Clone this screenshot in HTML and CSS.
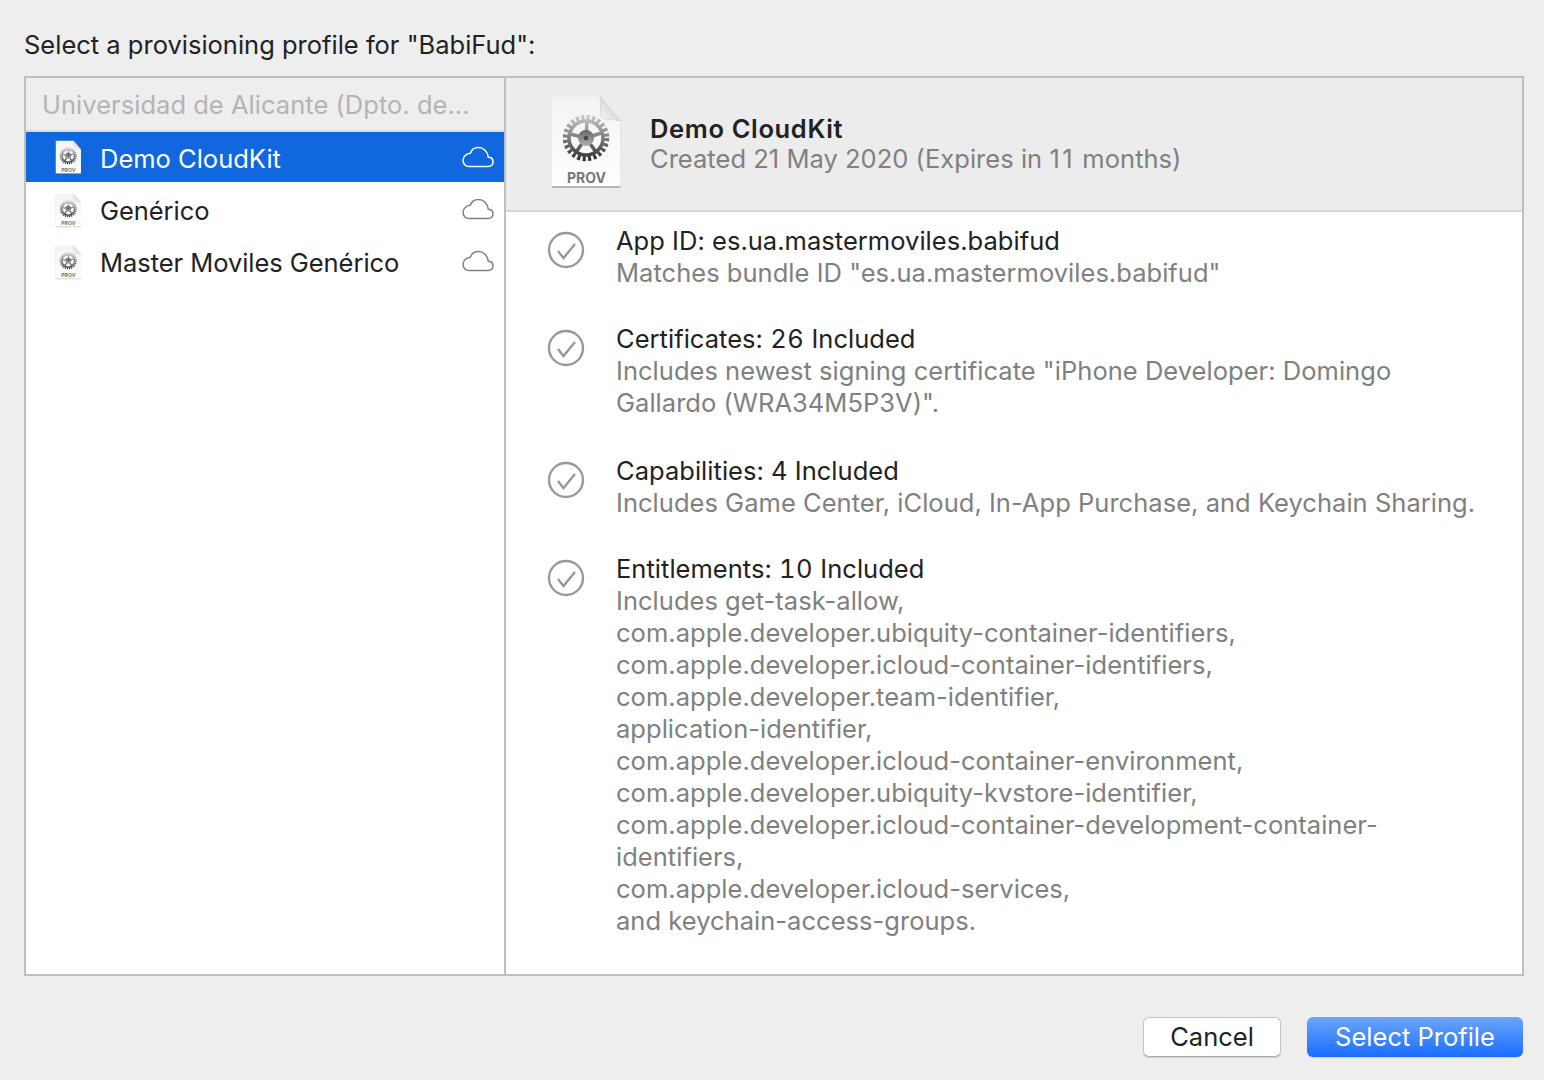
FILE: index.html
```html
<!DOCTYPE html>
<html lang="en">
<head>
    <meta charset="UTF-8">
    <title>Select a provisioning profile</title>
    <link rel="stylesheet" href="styles.css">
</head>
<body>
    <svg class="defs" width="0" height="0">
        <defs>
            <linearGradient id="paper" x1="0" y1="0" x2="0" y2="1">
                <stop offset="0" stop-color="#f3f3f3"/>
                <stop offset="1" stop-color="#ffffff"/>
            </linearGradient>
            <linearGradient id="fold" x1="0" y1="1" x2="1" y2="0">
                <stop offset="0" stop-color="#fbfbfb"/>
                <stop offset="1" stop-color="#bdbdbd"/>
            </linearGradient>
            <linearGradient id="steel" gradientUnits="userSpaceOnUse" x1="36" y1="18" x2="36" y2="66">
                <stop offset="0" stop-color="#d0d0d0"/>
                <stop offset="0.45" stop-color="#858585"/>
                <stop offset="1" stop-color="#2e2e2e"/>
            </linearGradient>
            <linearGradient id="hub" gradientUnits="userSpaceOnUse" x1="36" y1="34" x2="36" y2="50">
                <stop offset="0" stop-color="#666"/>
                <stop offset="1" stop-color="#b0b0b0"/>
            </linearGradient>
            <symbol id="prov" viewBox="0 0 76 96">
                <path d="M2 1.500H50L70.500 25V90.500H2Z" fill="#000" opacity="0.22" transform="translate(0 1.500)"/>
                <path d="M2 1H50L70.500 25V90H2Z" fill="url(#paper)"/>
                <path d="M50 1L70.500 25C62 23 54 24 51 21C50 15 51 8 50 1Z" fill="url(#fold)" stroke="#c8c8c8" stroke-width="0.600"/>
                <circle cx="36" cy="42" r="20.500" fill="none" stroke="url(#steel)" stroke-width="5.500" stroke-dasharray="3.100 2.270"/>
                <circle cx="36" cy="42" r="17" fill="none" stroke="url(#steel)" stroke-width="3.500"/>
                <path d="M36 42L37 26M36 42L51 37M36 42L46 56M36 42L26 56M36 42L20 38" stroke="url(#steel)" stroke-width="3.500"/>
                <circle cx="36" cy="42" r="8" fill="url(#hub)"/>
                <circle cx="36" cy="42" r="2.200" fill="#444"/>
                <text class="prov-label" x="36.500" y="87" text-anchor="middle">PROV</text>
            </symbol>
            <symbol id="cloud" viewBox="0 0 32 22">
                <path d="M7 20.500H26C29 20.500 31 18.500 31 15.800C31 13 29 11.200 26.300 11.200C25.600 5.500 21.500 1.500 16.500 1.500C12.500 1.500 9.500 3.800 8.300 7.300C4.300 7.500 1 10.500 1 14.300C1 17.800 3.500 20.500 7 20.500Z" fill="none" stroke="currentColor" stroke-width="1.500"/>
            </symbol>
            <symbol id="check" viewBox="0 0 38 38">
                <circle cx="19" cy="19" r="17" fill="none" stroke="#999" stroke-width="2.400"/>
                <path d="M11 20L16.500 27L28 13" fill="none" stroke="#999" stroke-width="2.400"/>
            </symbol>
        </defs>
    </svg>

    <h1 class="title">Select a provisioning profile for "BabiFud":</h1>

    <div class="panel">
        <div class="sidebar">
            <div class="team">Universidad de Alicante (Dpto. de...</div>
            <div class="row selected">
                <svg class="row-icon"><use href="#prov"/></svg>
                <span class="row-name">Demo CloudKit</span>
                <svg class="cloud"><use href="#cloud"/></svg>
            </div>
            <div class="row">
                <svg class="row-icon"><use href="#prov"/></svg>
                <span class="row-name">Genérico</span>
                <svg class="cloud"><use href="#cloud"/></svg>
            </div>
            <div class="row">
                <svg class="row-icon"><use href="#prov"/></svg>
                <span class="row-name">Master Moviles Genérico</span>
                <svg class="cloud"><use href="#cloud"/></svg>
            </div>
        </div>

        <div class="detail">
            <div class="detail-head">
                <svg class="big-icon"><use href="#prov"/></svg>
                <div class="head-text">
                    <div class="profile-name">Demo CloudKit</div>
                    <div class="muted">Created 21 May 2020 (Expires in <span class="months">11</span> months)</div>
                </div>
            </div>

            <div class="checks">
                <div class="check">
                    <svg class="check-icon"><use href="#check"/></svg>
                    <div>
                        <div class="check-title">App ID: es.ua.mastermoviles.babifud</div>
                        <div class="muted">Matches bundle ID "es.ua.mastermoviles.babifud"</div>
                    </div>
                </div>
                <div class="check wide-gap">
                    <svg class="check-icon"><use href="#check"/></svg>
                    <div>
                        <div class="check-title">Certificates: <span class="count">26</span> Included</div>
                        <div class="muted">Includes newest signing certificate "iPhone Developer: Domingo<br>Gallardo (WRA34M5P3V)".</div>
                    </div>
                </div>
                <div class="check">
                    <svg class="check-icon"><use href="#check"/></svg>
                    <div>
                        <div class="check-title">Capabilities: 4 Included</div>
                        <div class="muted">Includes Game Center, iCloud, In-App Purchase, and Keychain Sharing.</div>
                    </div>
                </div>
                <div class="check">
                    <svg class="check-icon"><use href="#check"/></svg>
                    <div>
                        <div class="check-title">Entitlements: <span class="count">10</span> Included</div>
                        <div class="muted">Includes get-task-allow,<br>com.apple.developer.ubiquity-container-identifiers,<br>com.apple.developer.icloud-container-identifiers,<br>com.apple.developer.team-identifier,<br>application-identifier,<br>com.apple.developer.icloud-container-environment,<br>com.apple.developer.ubiquity-kvstore-identifier,<br>com.apple.developer.icloud-container-development-container-<br>identifiers,<br>com.apple.developer.icloud-services,<br>and keychain-access-groups.</div>
                    </div>
                </div>
            </div>
        </div>
    </div>

    <div class="buttons">
        <button class="btn">Cancel</button>
        <button class="btn primary">Select Profile</button>
    </div>
</body>
</html>
```

FILE: styles.css
```css
* {
    box-sizing: border-box;
}
body {
    margin: 0;
    height: 1080px;
    overflow: hidden;
    padding: 29px 20px 0 24px;
    background-color: #eeeeee;
    color: #222;
    font-family: Inter, "Liberation Sans", sans-serif;
    font-size: 25.5px;
    letter-spacing: 0.03px;
    line-height: 32px;
}
.defs {
    position: absolute;
}
.title {
    margin: 0 0 15px;
    font-size: 25.5px;
    font-weight: 400;
    letter-spacing: 0;
    line-height: 32px;
}
.panel {
    display: flex;
    width: 1500px;
    height: 900px;
    background-color: #fff;
    border: 2px solid #bfbfbf;
}
.sidebar {
    width: 480px;
    border-right: 2px solid #bfbfbf;
    flex-shrink: 0;
}
.team {
    height: 54px;
    padding: 11px 0 0 16px;
    background-color: #eeeeee;
    border-bottom: 2px solid #dcdcdc;
    color: #b4b4b4;
}
.row {
    display: flex;
    align-items: center;
    height: 52px;
    padding: 0 10px 0 29px;
}
.row.selected {
    height: 50px;
    margin-bottom: 2px;
    background-color: #1167dd;
    color: #fff;
}
.row-icon {
    width: 28px;
    height: 36px;
    margin-top: 2px;
    flex-shrink: 0;
}
.row-name {
    flex: 1;
    margin-left: 17px;
    padding-top: 2px;
    letter-spacing: -0.05px;
}
.selected .row-name {
    padding-top: 4px;
    letter-spacing: 0;
}
.cloud {
    width: 32px;
    height: 22px;
    margin-top: -3px;
    color: #808080;
}
.selected .cloud {
    margin-top: 0;
    color: #fff;
}
.prov-label {
    font-size: 14px;
    font-weight: 700;
    fill: #777;
}
.detail {
    flex: 1;
}
.detail-head {
    display: flex;
    align-items: center;
    height: 134px;
    padding: 0 0 0 44px;
    background-color: #ececec;
    border-bottom: 2px solid #d6d6d6;
}
.big-icon {
    width: 76px;
    height: 96px;
    margin-right: 24px;
}
.head-text {
    line-height: 30px;
}
.profile-name {
    font-weight: 600;
    letter-spacing: 0.65px;
    color: #222;
}
.muted {
    color: #808080;
}
.months {
    letter-spacing: 2.5px;
}
.count {
    font-variant-numeric: tabular-nums;
    letter-spacing: 0.5px;
}
.checks {
    padding: 13px 0 0 41px;
}
.check {
    display: flex;
    margin-bottom: 34px;
}
.check.wide-gap {
    margin-bottom: 36px;
}
.check-icon {
    width: 38px;
    height: 38px;
    margin: 6px 31px 0 0;
    flex-shrink: 0;
}
.buttons {
    display: flex;
    justify-content: flex-end;
    gap: 26px;
    width: 1499px;
    margin-top: 41px;
}
.btn {
    height: 40px;
    width: 138px;
    padding: 0;
    border: 1px solid #c4c4c4;
    border-bottom-color: #a9a9a9;
    border-radius: 6px;
    background-color: #fff;
    color: #222;
    font-family: inherit;
    font-size: 25.5px;
    letter-spacing: 0;
    line-height: 38px;
    box-shadow: 0 1px 1px rgba(0, 0, 0, 0.12);
}
.btn.primary {
    width: 216px;
    border: none;
    background: linear-gradient(#6aa6fb, #1a6dff);
    color: #fff;
}
```
